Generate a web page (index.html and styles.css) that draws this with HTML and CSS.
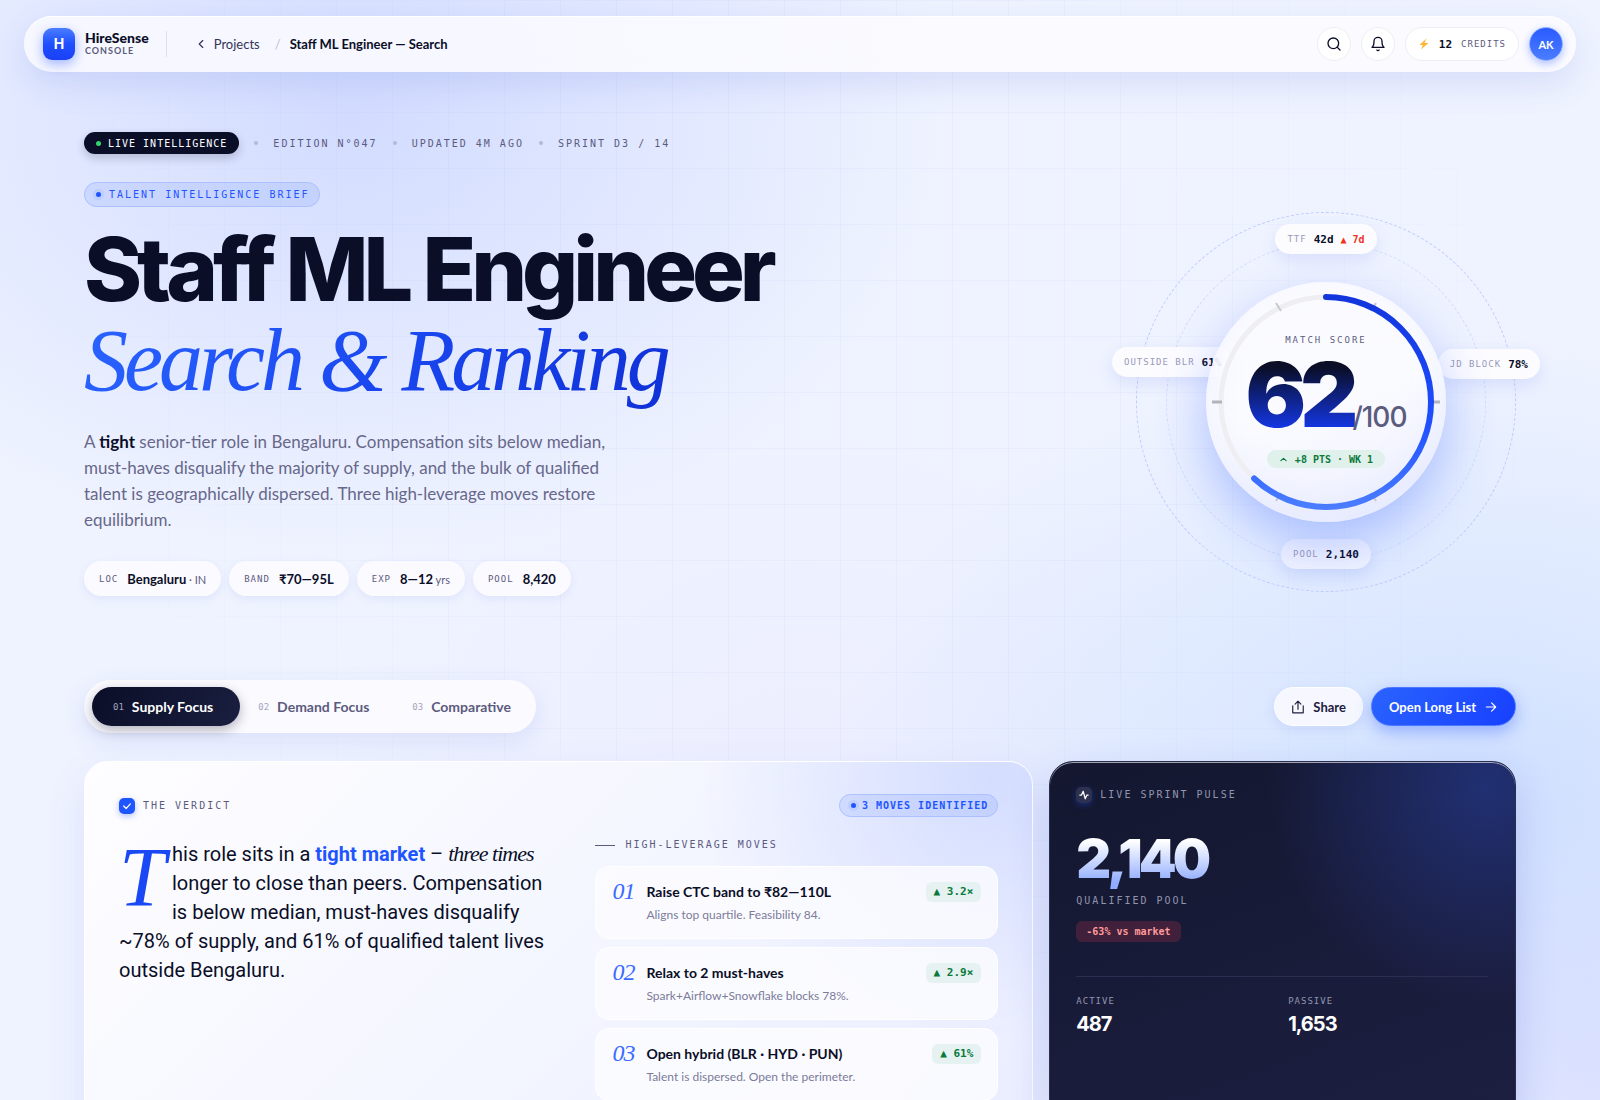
FILE: index.html
```
<!DOCTYPE html>
<html lang="en">

<head>
    <meta charset="UTF-8">
    <meta name="viewport" content="width=device-width, initial-scale=1.0">
    <title>HireSense Console</title>
    <link rel="stylesheet" href="styles.css">
</head>

<body>
    <header class="topbar">
        <div class="logo">H</div>
        <div class="brand">
            <div class="brand-name">HireSense</div>
            <div class="brand-sub">CONSOLE</div>
        </div>
        <nav class="crumbs">
            <a href="#">
                <svg width="14" height="14" viewBox="0 0 24 24"><path d="M15 18l-6-6 6-6" /></svg>
                Projects
            </a>
            <span class="slash">/</span>
            <span class="current">Staff ML Engineer — Search</span>
        </nav>
        <div class="actions">
            <button class="icon-btn" aria-label="Search">
                <svg width="16" height="16" viewBox="0 0 24 24"><circle cx="11" cy="11" r="8" /><path d="M21 21l-4.3-4.3" /></svg>
            </button>
            <button class="icon-btn" aria-label="Notifications">
                <svg width="16" height="16" viewBox="0 0 24 24"><path d="M6 8a6 6 0 0 1 12 0c0 7 3 9 3 9H3s3-2 3-9M10.3 21a1.94 1.94 0 0 0 3.4 0" /></svg>
            </button>
            <button class="credits">
                <svg class="bolt" width="12" height="12" viewBox="0 0 24 24"><path d="M17 1L3 14h7L6 23 21 10h-8z" /></svg>
                <b>12</b>
                <span>CREDITS</span>
            </button>
            <button class="avatar">AK</button>
        </div>
    </header>

    <main>
        <div class="meta">
            <span class="live">LIVE INTELLIGENCE</span>
            <i></i>
            <span>EDITION N°047</span>
            <i></i>
            <span>UPDATED 4M AGO</span>
            <i></i>
            <span>SPRINT D3 / 14</span>
        </div>

        <section class="hero">
            <div class="hero-text">
                <span class="tag">TALENT INTELLIGENCE BRIEF</span>
                <h1>Staff ML Engineer <em>Search &amp; Ranking</em></h1>
                <p class="lead">A <strong>tight</strong> senior-tier role in Bengaluru. Compensation sits below median, must-haves disqualify the majority of supply, and the bulk of qualified talent is geographically dispersed. Three high-leverage moves restore equilibrium.</p>
                <div class="chips">
                    <span class="chip"><small>LOC</small><span><b>Bengaluru</b> · IN</span></span>
                    <span class="chip"><small>BAND</small><b>₹70—95L</b></span>
                    <span class="chip"><small>EXP</small><span><b>8—12</b> yrs</span></span>
                    <span class="chip"><small>POOL</small><b>8,420</b></span>
                </div>
            </div>

            <div class="gauge">
                <div class="orbit"></div>
                <div class="sat sat-top"><small>TTF</small><b>42d</b><b class="up">▲ 7d</b></div>
                <div class="sat sat-left"><small>OUTSIDE BLR</small><b>61%</b></div>
                <div class="sat sat-right"><small>JD BLOCK</small><b>78%</b></div>
                <div class="sat sat-bottom"><small>POOL</small><b>2,140</b></div>
                <div class="dial">
                    <svg class="dial-ring" viewBox="0 0 240 240">
                        <defs>
                            <linearGradient id="arc" x1="0" y1="0" x2="1" y2="0">
                                <stop offset="0" stop-color="#4a7dff" />
                                <stop offset="0.4" stop-color="#1f4fff" />
                                <stop offset="1" stop-color="#1236dc" />
                            </linearGradient>
                        </defs>
                        <circle class="track" cx="120" cy="120" r="105" />
                        <g class="ticks">
                            <path class="thick" d="M6 120h10M224 120h10" />
                            <path d="M70 21l5 8M170 21l-5 8M70 219l5-8M170 219l-5-8" />
                        </g>
                        <circle class="value" cx="120" cy="120" r="105" pathLength="100" stroke-dasharray="62 100" transform="rotate(-90 120 120)" />
                    </svg>
                    <div class="dial-label">MATCH SCORE</div>
                    <div class="dial-score"><b>62</b><span>/100</span></div>
                    <div class="dial-delta">
                        <svg width="9" height="9" viewBox="0 0 24 24"><path d="M5 15l7-6 7 6" /></svg>
                        +8 PTS · WK 1
                    </div>
                </div>
            </div>
        </section>

        <div class="toolbar">
            <div class="tabs">
                <button class="tab active"><small>01</small>Supply Focus</button>
                <button class="tab"><small>02</small>Demand Focus</button>
                <button class="tab"><small>03</small>Comparative</button>
            </div>
            <div class="buttons">
                <button class="btn">
                    <svg width="14" height="14" viewBox="0 0 24 24"><path d="M3 10v12h18V10M12 16V2M7 7l5-5 5 5" /></svg>
                    Share
                </button>
                <button class="btn primary">
                    Open Long List
                    <svg width="14" height="14" viewBox="0 0 24 24"><path d="M4 12h16M13 5l7 7-7 7" /></svg>
                </button>
            </div>
        </div>

        <div class="cards">
            <section class="card verdict">
                <div class="card-head">
                    <span class="card-icon"><svg width="10" height="10" viewBox="0 0 24 24"><path d="M4 12l6 6L20 7" /></svg></span>
                    <span class="label">THE VERDICT</span>
                    <span class="tag small">3 MOVES IDENTIFIED</span>
                </div>
                <div class="verdict-body">
                    <p class="story"><span class="drop">T</span>his role sits in a <strong>tight market</strong> – <em>three times</em> longer to close than peers. Compensation is below median, must-haves disqualify ~78% of supply, and 61% of qualified talent lives outside Bengaluru.</p>
                    <div>
                        <div class="label lined">HIGH-LEVERAGE MOVES</div>
                        <ol class="moves">
                            <li>
                                <span class="num">01</span>
                                <div>
                                    <h3>Raise CTC band to ₹82—110L</h3>
                                    <p>Aligns top quartile. Feasibility 84.</p>
                                </div>
                                <span class="gain">▲ 3.2×</span>
                            </li>
                            <li>
                                <span class="num">02</span>
                                <div>
                                    <h3>Relax to 2 must-haves</h3>
                                    <p>Spark+Airflow+Snowflake blocks 78%.</p>
                                </div>
                                <span class="gain">▲ 2.9×</span>
                            </li>
                            <li>
                                <span class="num">03</span>
                                <div>
                                    <h3>Open hybrid (BLR · HYD · PUN)</h3>
                                    <p>Talent is dispersed. Open the perimeter.</p>
                                </div>
                                <span class="gain">▲ 61%</span>
                            </li>
                        </ol>
                    </div>
                </div>
            </section>

            <section class="card pulse">
                <div class="card-head">
                    <span class="card-icon"><svg width="10" height="10" viewBox="0 0 24 24"><path d="M2 12h4l4-9 5 18 4-9h3" /></svg></span>
                    <span class="label">LIVE SPRINT PULSE</span>
                </div>
                <div class="big">2,140</div>
                <div class="label">QUALIFIED POOL</div>
                <span class="loss">-63% vs market</span>
                <div class="split">
                    <div><small>ACTIVE</small><b>487</b></div>
                    <div><small>PASSIVE</small><b>1,653</b></div>
                </div>
            </section>
        </div>
    </main>
</body>

</html>
```
FILE: styles.css
```
:root {
    --ink: #0a0e27;
    --muted: #5b5b7e;
    --soft: #9a9ab8;
    --blue: #1f55ff;
    --sans: Lato, "Liberation Sans", sans-serif;
    --display: Inter, "Liberation Sans", sans-serif;
    --mono: "DejaVu Sans Mono", "Liberation Mono", monospace;
    --serif: "Liberation Serif", serif;
}

* {
    box-sizing: border-box;
}

body {
    margin: 0;
    padding: 16px 24px 40px;
    font-family: var(--sans);
    font-size: 13px;
    color: var(--ink);
    position: relative;
    background:
        radial-gradient(ellipse 600px 440px at 22% 10%, rgba(170, 188, 255, 0.42), transparent),
        radial-gradient(ellipse 640px 440px at 92% 66%, rgba(160, 198, 255, 0.38), transparent),
        radial-gradient(ellipse 480px 500px at 50% 72%, rgba(228, 224, 255, 0.3), transparent),
        radial-gradient(ellipse 400px 400px at 100% 90%, rgba(205, 205, 255, 0.4), transparent),
        #eff3ff;
}

/* faint grid behind everything */
body::before {
    content: "";
    position: absolute;
    inset: 0;
    z-index: -1;
    background-image:
        linear-gradient(rgba(80, 110, 220, 0.04) 1px, transparent 1px),
        linear-gradient(90deg, rgba(80, 110, 220, 0.04) 1px, transparent 1px);
    background-size: 56px 56px;
    mask-image: radial-gradient(ellipse at 50% 30%, black 30%, transparent 70%);
}

button {
    font: inherit;
    color: inherit;
    cursor: pointer;
}

svg {
    fill: none;
    stroke: currentColor;
    stroke-width: 2;
    stroke-linecap: round;
    stroke-linejoin: round;
}

small {
    font-family: var(--mono);
    font-size: 9px;
    letter-spacing: 1px;
}

/* top bar */
.topbar {
    display: flex;
    align-items: center;
    height: 56px;
    padding: 0 13px 0 19px;
    border-radius: 28px;
    background: linear-gradient(90deg, rgba(250, 250, 255, 0.85), #fbfbff);
    box-shadow: 0 12px 32px rgba(90, 110, 220, 0.16), inset 0 1px 0 white;
}

.logo {
    width: 32px;
    height: 32px;
    border-radius: 9px;
    text-align: center;
    font: 700 14px/32px var(--display);
    color: white;
    background: linear-gradient(#4a7dff, #1f4fff 50%, #1a40f5);
    box-shadow: 0 4px 12px rgba(31, 79, 255, 0.4);
}

.brand {
    margin-left: 10px;
    padding-right: 17px;
    border-right: 1px solid #dddff0;
    line-height: 14px;
}

.brand-name {
    font-size: 14px;
    font-weight: 900;
}

.brand-sub {
    font-size: 9px;
    font-weight: 700;
    line-height: 12px;
    letter-spacing: 1px;
    color: var(--muted);
}

.crumbs {
    display: flex;
    align-items: center;
    gap: 9px;
    margin-left: 27px;
}

.crumbs a {
    display: flex;
    align-items: center;
    gap: 6px;
    margin-right: 6px;
    color: #33335a;
    text-decoration: none;
}

.slash {
    color: #c0c0d4;
}

.current {
    font-weight: 700;
}

.actions {
    display: flex;
    align-items: center;
    gap: 10px;
    margin-left: auto;
}

.icon-btn,
.avatar,
.credits {
    height: 34px;
    padding: 0;
    border: 1px solid #eeeef8;
    border-radius: 17px;
    background: white;
}

.icon-btn,
.avatar {
    display: grid;
    place-items: center;
    width: 34px;
}

.credits {
    display: flex;
    align-items: center;
    gap: 9px;
    padding: 0 12px;
    font-family: var(--mono);
    font-size: 11px;
}

.credits span {
    font-size: 9px;
    letter-spacing: 1px;
    color: var(--muted);
}

.bolt {
    fill: #ffb52e;
    stroke: none;
}

.avatar {
    border-color: #8fb0ff;
    background: linear-gradient(#2b5bff, #4a7dff);
    color: white;
    font-size: 11px;
    font-weight: 700;
    box-shadow: 0 3px 8px rgba(31, 79, 255, 0.35);
}

main {
    padding: 60px 60px 0;
}

/* meta row */
.meta {
    display: flex;
    align-items: center;
    gap: 15px;
    margin-bottom: 28px;
    font-family: var(--mono);
    font-size: 10px;
    letter-spacing: 2px;
    color: var(--muted);
}

.meta i {
    width: 4px;
    height: 4px;
    border-radius: 50%;
    background: #b4b8d8;
}

.live {
    display: flex;
    align-items: center;
    gap: 7px;
    height: 22px;
    padding: 0 12px;
    border-radius: 11px;
    background: var(--ink);
    color: white;
    letter-spacing: 1px;
    box-shadow: 0 4px 10px rgba(10, 14, 39, 0.2);
}

.live::before,
.tag::before {
    content: "";
    width: 5px;
    height: 5px;
    border-radius: 50%;
    background: #34d36f;
}

.tag {
    display: inline-flex;
    align-items: center;
    gap: 8px;
    height: 25px;
    padding: 0 9px 0 11px;
    border: 1px solid #acbfff;
    border-radius: 13px;
    background: rgba(31, 85, 255, 0.1);
    font: 10px var(--mono);
    letter-spacing: 2px;
    color: var(--blue);
}

.tag::before {
    background: var(--blue);
    box-shadow: 0 0 0 3px rgba(31, 85, 255, 0.08);
}

.tag.small {
    gap: 6px;
    height: 23px;
    margin-left: auto;
    font-weight: 700;
    letter-spacing: 1px;
}

/* hero */
.hero {
    display: flex;
    align-items: flex-end;
    justify-content: space-between;
}

h1 {
    margin: 16px 0 0;
    font: 800 88px/92px var(--display);
    letter-spacing: -5px;
}

h1 em {
    display: block;
    width: fit-content;
    padding: 0 8px 8px 0;
    font: italic 400 88px/92px var(--serif);
    letter-spacing: -4px;
    color: transparent;
    background: linear-gradient(120deg, #2a63ff, #1a48f0 50%, #0f2fd6);
    background-clip: text;
}

.lead {
    max-width: 540px;
    margin: 14px 0 28px;
    font-size: 17px;
    line-height: 26px;
    color: #67678a;
}

.lead strong {
    color: var(--ink);
}

.chips {
    display: flex;
    gap: 8px;
}

.chip {
    display: flex;
    align-items: center;
    gap: 9px;
    height: 35px;
    padding: 0 15px;
    border-radius: 18px;
    background: rgba(252, 251, 255, 0.9);
    box-shadow: 0 3px 8px rgba(90, 110, 220, 0.1);
    font-size: 11px;
    color: var(--muted);
}

.chip b {
    font-size: 13px;
    color: var(--ink);
}

/* gauge */
.gauge {
    position: relative;
    display: grid;
    place-items: center;
    flex: none;
    width: 380px;
    height: 380px;
    margin-bottom: 4px;
    border: 1px dashed #bccbff;
    border-radius: 50%;
}

.orbit {
    position: absolute;
    inset: 29px;
    border: 1px dashed #d0dbff;
    border-radius: 50%;
}

.sat {
    position: absolute;
    display: flex;
    align-items: center;
    gap: 7px;
    height: 30px;
    padding: 0 12px;
    border-radius: 15px;
    background: #fcfcff;
    box-shadow: 0 6px 16px rgba(60, 90, 220, 0.12);
    font: 11px var(--mono);
    white-space: nowrap;
}

.sat small {
    color: var(--soft);
}

.sat .up {
    font-size: 10px;
    color: #f0321e;
}

.sat-top {
    top: 11px;
}

.sat-left {
    top: 134px;
    left: -25px;
}

.sat-right {
    top: 136px;
    right: -25px;
}

.sat-bottom {
    bottom: 22px;
    background: rgba(245, 245, 255, 0.75);
}

.dial {
    position: relative;
    display: flex;
    flex-direction: column;
    align-items: center;
    width: 240px;
    height: 240px;
    padding-top: 51px;
    border-radius: 50%;
    background: linear-gradient(160deg, rgba(252, 252, 255, 0.88), rgba(252, 252, 255, 0.92) 50%, #eceffe);
    box-shadow: 0 20px 50px rgba(31, 79, 255, 0.3), inset 0 -20px 40px rgba(150, 170, 255, 0.1);
}

.dial-ring {
    position: absolute;
    inset: 0;
}

.track {
    stroke: #eeeef3;
    stroke-width: 5;
}

.value {
    stroke: url(#arc);
    stroke-width: 6;
}

.ticks {
    stroke: #c8c8d0;
    stroke-linecap: butt;
}

.ticks .thick {
    stroke: #b4b4be;
    stroke-width: 3;
}

.dial-label {
    font: 9px/14px var(--mono);
    letter-spacing: 2px;
    color: var(--muted);
}

.dial-score {
    display: flex;
    align-items: baseline;
    height: 92px;
    margin-top: 2px;
    font-family: var(--display);
    line-height: 92px;
}

.dial-score b {
    font-size: 90px;
    font-weight: 900;
    letter-spacing: -6px;
    padding-right: 6px;
    margin-right: -6px;
    color: transparent;
    background: linear-gradient(#0a0e27 20%, #1436e0 85%);
    background-clip: text;
}

.dial-score span {
    font-size: 28px;
    font-weight: 500;
    letter-spacing: -1px;
    color: var(--muted);
}

.dial-delta {
    display: flex;
    align-items: center;
    gap: 7px;
    height: 18px;
    margin-top: 9px;
    padding: 0 12px;
    border-radius: 9px;
    background: #e0f0ea;
    font: 700 10px var(--mono);
    color: #0a7a3c;
}

.dial-delta svg {
    stroke-width: 3;
}

/* tabs and buttons */
.toolbar {
    display: flex;
    align-items: center;
    justify-content: space-between;
    margin: 84px 0 28px;
}

.tabs {
    display: flex;
    padding: 7px 0 7px 8px;
    border-radius: 27px;
    background: #fbfaff;
    box-shadow: 0 8px 24px rgba(90, 110, 220, 0.14);
}

.tab {
    display: flex;
    align-items: center;
    gap: 8px;
    height: 39px;
    padding: 0 25px 0 18px;
    border: 0;
    border-radius: 20px;
    background: none;
    font-size: 14px;
    font-weight: 700;
    color: var(--muted);
}

.tab small {
    font-weight: 400;
    letter-spacing: 0;
    color: #a4a4bf;
}

.tab.active {
    padding: 0 27px 0 21px;
    background: linear-gradient(120deg, #0a0e27, #1a1f40);
    color: white;
    box-shadow: 0 4px 12px rgba(10, 14, 39, 0.3);
}

.buttons {
    display: flex;
    gap: 8px;
}

.btn {
    display: flex;
    align-items: center;
    gap: 8px;
    height: 39px;
    padding: 0 16px;
    border: 1px solid white;
    border-radius: 20px;
    background: rgba(248, 248, 255, 0.9);
    font-weight: 700;
    color: #1e2040;
    box-shadow: 0 4px 12px rgba(90, 110, 220, 0.12);
}

.btn.primary {
    padding: 0 17px;
    border-color: #4a78ff;
    background: linear-gradient(120deg, #2a63ff, #1840ff);
    color: white;
    box-shadow: 0 6px 16px rgba(31, 79, 255, 0.35);
}

/* cards */
.cards {
    display: grid;
    grid-template-columns: repeat(12, 1fr);
    gap: 16px;
}

.card {
    border: 1px solid white;
    border-radius: 24px;
}

.card-head {
    display: flex;
    align-items: center;
    gap: 8px;
}

.card-icon {
    display: grid;
    place-items: center;
    width: 16px;
    height: 16px;
    border-radius: 5px;
    background: var(--blue);
    color: white;
    box-shadow: 0 2px 6px rgba(31, 79, 255, 0.35);
}

.card-icon svg {
    stroke-width: 3;
}

.label {
    font: 10px/14px var(--mono);
    letter-spacing: 2px;
    color: var(--muted);
}

.verdict {
    grid-column: span 8;
    padding: 32px 34px 34px;
    background:
        radial-gradient(ellipse 300px 260px at 96% 4%, rgba(200, 212, 255, 0.7), transparent),
        linear-gradient(135deg, #fefdff, #f5f7ff 45%, #eaedff);
    box-shadow: 0 16px 40px rgba(90, 110, 220, 0.12);
}

.verdict-body {
    display: grid;
    grid-template-columns: 13fr 12fr;
    gap: 40px;
    margin-top: 21px;
}

.story {
    margin: 2px 0 0;
    font-family: Roboto, var(--display);
    font-size: 20px;
    line-height: 29px;
}

.story strong {
    color: var(--blue);
}

.story em {
    font-family: var(--serif);
    font-size: 22px;
    line-height: 20px;
    letter-spacing: -1px;
}

.drop {
    float: left;
    width: 53px;
    height: 87px;
    font: italic 84px/76px var(--serif);
    color: #1a48f5;
}

.lined {
    display: flex;
    align-items: center;
    gap: 10px;
}

.lined::before {
    content: "";
    width: 20px;
    height: 1px;
    background: var(--muted);
}

.moves {
    display: grid;
    gap: 8px;
    margin: 14px 0 0;
    padding: 0;
    list-style: none;
}

.moves li {
    display: grid;
    grid-template-columns: 34px 1fr auto;
    align-items: start;
    padding: 15px 16px 14px;
    border: 1px solid white;
    border-radius: 14px;
    background: rgba(253, 252, 255, 0.8);
}

.num {
    font: italic 24px/18px var(--serif);
    letter-spacing: -1px;
    color: #3c6cff;
}

.moves h3 {
    margin: 0;
    font-size: 14px;
    line-height: 20px;
}

.moves p {
    margin: 4px 0 0;
    font-size: 12px;
    line-height: 18px;
    color: #7b7b9a;
}

.gain {
    padding: 0 8px;
    border-radius: 6px;
    background: #e6f2f2;
    font: 700 11px/20px var(--mono);
    color: #0a7a3c;
}

.pulse {
    grid-column: span 4;
    padding: 25px 27px 24px 26px;
    border-color: #2a2f50;
    background:
        radial-gradient(circle 220px at 94% 6%, rgba(45, 75, 190, 0.45), transparent),
        linear-gradient(160deg, #14172f, #1d1f42);
    box-shadow: 0 16px 40px rgba(60, 80, 200, 0.2), inset 0 1px 0 rgba(255, 255, 255, 0.6);
    color: white;
}

.pulse .label,
.pulse small {
    color: #9096b0;
}

.pulse .card-icon {
    background: #2d3150;
}

.big {
    width: fit-content;
    margin: 26px 0 5px;
    padding-right: 4px;
    font: 900 54px/60px var(--display);
    letter-spacing: -4px;
    color: transparent;
    background: linear-gradient(white 20%, #8fabff 90%);
    background-clip: text;
}

.loss {
    display: inline-block;
    margin-top: 13px;
    padding: 0 10px;
    border-radius: 6px;
    background: #40203a;
    font: 700 10px/21px var(--mono);
    color: #ff9a9a;
}

.split {
    display: grid;
    grid-template-columns: 1fr 1fr;
    gap: 12px;
    margin-top: 34px;
    padding-top: 14px;
    border-top: 1px solid #2b2e50;
}

.split b {
    display: block;
    margin-top: 4px;
    font: 700 20px/26px var(--display);
    letter-spacing: -1px;
}
```
